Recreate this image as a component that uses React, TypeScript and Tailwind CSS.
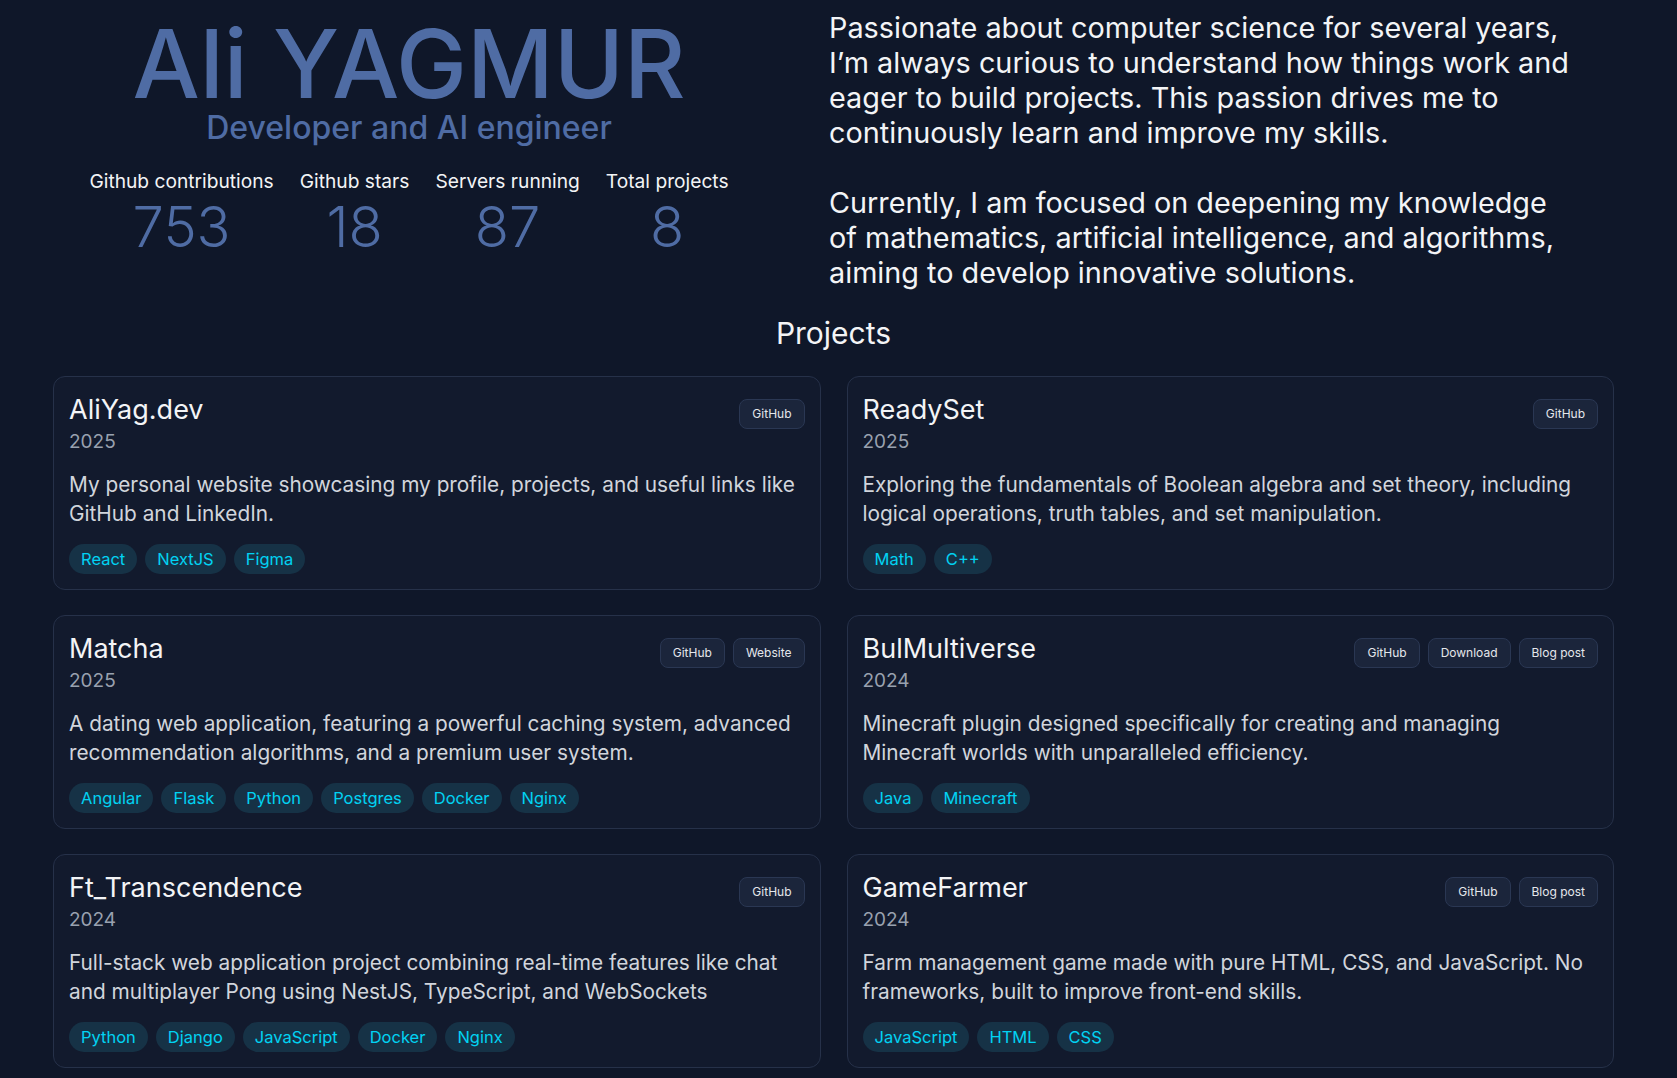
import React from 'react';

type Project = {
  title: string;
  year: string;
  description: string;
  links: string[];
  tags: string[];
};

const projects: Project[] = [
  {
    title: 'AliYag.dev',
    year: '2025',
    description: 'My personal website showcasing my profile, projects, and useful links like GitHub and LinkedIn.',
    links: ['GitHub'],
    tags: ['React', 'NextJS', 'Figma'],
  },
  {
    title: 'ReadySet',
    year: '2025',
    description:
      'Exploring the fundamentals of Boolean algebra and set theory, including logical operations, truth tables, and set manipulation.',
    links: ['GitHub'],
    tags: ['Math', 'C++'],
  },
  {
    title: 'Matcha',
    year: '2025',
    description:
      'A dating web application, featuring a powerful caching system, advanced recommendation algorithms, and a premium user system.',
    links: ['GitHub', 'Website'],
    tags: ['Angular', 'Flask', 'Python', 'Postgres', 'Docker', 'Nginx'],
  },
  {
    title: 'BulMultiverse',
    year: '2024',
    description:
      'Minecraft plugin designed specifically for creating and managing Minecraft worlds with unparalleled efficiency.',
    links: ['GitHub', 'Download', 'Blog post'],
    tags: ['Java', 'Minecraft'],
  },
  {
    title: 'Ft_Transcendence',
    year: '2024',
    description:
      'Full-stack web application project combining real-time features like chat and multiplayer Pong using NestJS, TypeScript, and WebSockets',
    links: ['GitHub'],
    tags: ['Python', 'Django', 'JavaScript', 'Docker', 'Nginx'],
  },
  {
    title: 'GameFarmer',
    year: '2024',
    description:
      'Farm management game made with pure HTML, CSS, and JavaScript. No frameworks, built to improve front-end skills.',
    links: ['GitHub', 'Blog post'],
    tags: ['JavaScript', 'HTML', 'CSS'],
  },
];

const stats = [
  { label: 'Github contributions', value: '753' },
  { label: 'Github stars', value: '18' },
  { label: 'Servers running', value: '87' },
  { label: 'Total projects', value: '8' },
];

function ProjectCard({ project }: { project: Project }) {
  return (
    <div className="rounded-xl border border-[#263149] bg-[#121a2d] px-[15px] pt-[17px] pb-[15px]">
      <div className="flex items-start justify-between">
        <div>
          <h3 className="text-[27px] leading-[31px] text-gray-100">{project.title}</h3>
          <div className="mt-[3px] text-[19px] leading-7 text-gray-400">{project.year}</div>
        </div>
        <div className="mt-[5px] flex gap-2">
          {project.links.map((link) => (
            <button
              key={link}
              className="rounded-lg border border-[#2a3753] bg-[#1b253b] px-3 py-1.5 text-xs leading-4 text-gray-200"
            >
              {link}
            </button>
          ))}
        </div>
      </div>

      <p className="mt-[14px] text-[20.8px] leading-[29px] text-gray-300">{project.description}</p>

      <div className="mt-4 flex gap-2">
        {project.tags.map((tag) => (
          <span
            key={tag}
            className="rounded-full bg-[#163246] px-3 py-[3px] text-[16.5px] leading-6 text-cyan-400"
          >
            {tag}
          </span>
        ))}
      </div>
    </div>
  );
}

export default function App() {
  return (
    <div className="min-h-screen bg-[#0f1729] font-['Inter','Noto_Sans',sans-serif]">
      <div className="ml-[53px] w-[1561px]">
        {/* Header */}
        <div className="flex">
          <div className="flex w-[712px] flex-col items-center pt-4">
            <h1 className="text-[95px] font-medium leading-[96px] text-[#4f6ca4]">Ali YAGMUR</h1>
            <div className="text-[32px] font-medium leading-[32px] text-[#4f6ca4]">
              Developer and AI engineer
            </div>

            <div className="mt-[23px] flex gap-[26px]">
              {stats.map((s) => (
                <div key={s.label} className="flex flex-col items-center">
                  <div className="text-[19.2px] leading-7 text-gray-100">{s.label}</div>
                  <div className="mt-0.5 text-[56px] font-light leading-[60px] text-[#4f6ca4]">{s.value}</div>
                </div>
              ))}
            </div>
          </div>

          <div className="ml-[64px] w-[750px] pt-[10px] text-[28.8px] leading-[35px] text-gray-100">
            <p>
              Passionate about computer science for several years, I’m always curious to understand how things
              work and eager to build projects. This passion drives me to continuously learn and improve my skills.
            </p>
            <p className="mt-[35px]">
              Currently, I am focused on deepening my knowledge of mathematics, artificial intelligence, and
              algorithms, aiming to develop innovative solutions.
            </p>
          </div>
        </div>

        {/* Projects */}
        <h2 className="mt-[25px] text-center text-3xl text-gray-100">Projects</h2>

        <div className="mt-[25px] grid grid-cols-2 gap-x-[26px] gap-y-[25px] pb-[10px]">
          {projects.map((p) => (
            <ProjectCard key={p.title} project={p} />
          ))}
        </div>
      </div>
    </div>
  );
}
